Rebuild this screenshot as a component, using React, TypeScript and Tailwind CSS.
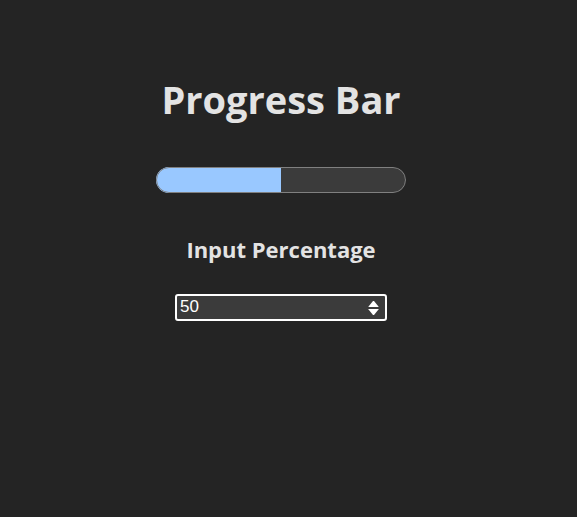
import { useState } from "react";

function ProgressBar({ value }: { value: number }) {
  return (
    <div
      role="progressbar"
      aria-label="Progress"
      aria-valuenow={value}
      aria-valuemin={0}
      aria-valuemax={100}
      className="relative mt-10 h-[26px] w-[250px] overflow-hidden rounded-full bg-[#3b3b3b]"
    >
      <div className="h-full bg-[#99c8ff]" style={{ width: `${value}%` }} />
      <div className="absolute inset-0 rounded-full border border-[#808080]" />
    </div>
  );
}

export default function App() {
  const [text, setText] = useState("50");
  const value = Math.min(100, Math.max(0, Number(text) || 0));
  const step = (amount: number) =>
    setText(String(Math.min(100, Math.max(0, value + amount))));

  return (
    <main className="flex min-h-screen flex-col items-center bg-[#242424] pt-18 pr-[15px] font-['Open_Sans','Noto_Sans',sans-serif] text-[#e3e3e3] scheme-dark">
      <h1 className="pb-px text-[38px] leading-[54px] font-bold">Progress Bar</h1>
      <ProgressBar value={value} />
      <label htmlFor="percentage" className="mt-10 text-[22px] leading-8 font-bold">
        Input Percentage
      </label>
      <div className="relative mt-[29px] w-[212px]">
        <input
          id="percentage"
          type="number"
          min={0}
          max={100}
          value={text}
          onChange={(event) => setText(event.target.value)}
          className="block h-[27px] w-full appearance-none rounded-[3px] border-2 border-white bg-[#3b3b3b] pr-5 pb-0.5 pl-[3px] font-['Liberation_Sans',Arial,sans-serif] text-[17px] leading-5 text-white outline-none [&::-webkit-inner-spin-button]:appearance-none"
        />
        <div className="absolute inset-y-0 right-1 flex w-[19px] flex-col items-center justify-center gap-0.5">
          <button type="button" aria-label="Increase" onClick={() => step(1)}>
            <svg width="11" height="6" viewBox="0 0 11 6" fill="white" className="block">
              <path d="M5 0H6L10.5 5.5V6H0.5V5.5Z" />
            </svg>
          </button>
          <button type="button" aria-label="Decrease" onClick={() => step(-1)}>
            <svg width="11" height="6" viewBox="0 0 11 6" fill="white" className="block">
              <path d="M0.5 0H10.5V0.5L6 6H5L0.5 0.5Z" />
            </svg>
          </button>
        </div>
      </div>
    </main>
  );
}
